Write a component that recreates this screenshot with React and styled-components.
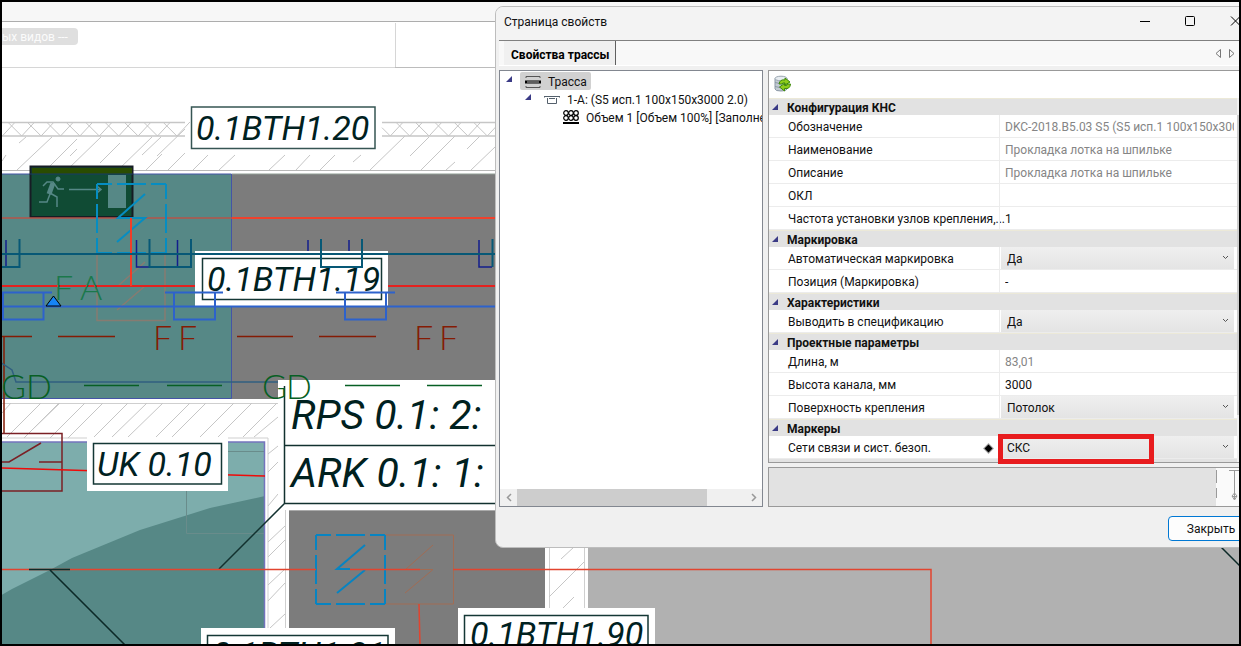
import React from "react";
import styled, { createGlobalStyle, css } from "styled-components";

const UI = `Roboto, "Noto Sans", sans-serif`;
const CAD = `Roboto, "Liberation Sans", sans-serif`;

const Global = createGlobalStyle`
  *, *::before, *::after { box-sizing: border-box; }
  body { margin: 0; background: #000; font: 12px/16px ${UI}; color: #111; }
`;

const Stage = styled.main`
  position: relative;
  height: 100vh;
  border: 2px solid #000;
  background: #fff;
  overflow: hidden;
`;

const Plan = styled.svg`
  position: absolute;
  inset: 0;
  width: 100%;
  height: 100%;
`;

const PlanLabel = styled.text`
  font-family: ${CAD};
  font-style: italic;
  font-size: ${(p) => (p.$large ? 41 : 34)}px;
  fill: #00211f;
`;

const LineLabel = styled.text`
  font-family: Lato, "Open Sans", sans-serif;
  font-weight: 300;
  font-size: 34px;
`;

const ViewTag = styled.button`
  position: absolute;
  top: 26px;
  left: -6px;
  height: 17px;
  padding: 0 10px 0 6px;
  border: 0;
  border-radius: 4px;
  background: #dfdfdf;
  color: #fbfbfb;
  font: 12px/16px ${UI};
`;

/* ---------- dialog ---------- */

const Dialog = styled.section`
  position: absolute;
  top: 4px;
  left: 493px;
  right: -21px;
  display: flex;
  flex-direction: column;
  border: 1px solid #bdbdbd;
  border-radius: 8px;
  background: #f0f0f0;
  overflow: hidden;
`;

const TitleBar = styled.header`
  display: flex;
  align-items: center;
  height: 33px;
  padding: 0 1px 4px 8px;
  background: #f3f3f3;
`;

const Title = styled.h1`
  flex: 1;
  margin: 0;
  font: 12px/16px ${UI};
`;

const WindowButton = styled.button`
  display: grid;
  place-items: center;
  width: 45px;
  height: 28px;
  padding: 0;
  border: 0;
  background: none;
`;

const Tabs = styled.div`
  display: flex;
  align-items: stretch;
  height: 26px;
  margin-left: 3px;
  padding-left: 5px;
  border-top: 1px solid #808080;
  border-bottom: 1px solid #fff;
  background: #f8f8f8;
`;

const Tab = styled.button`
  padding: 3px 7px 0;
  width: 112px;
  border: 0;
  border-right: 1px solid #606060;
  background: #f0f0f0;
  color: #000;
  font: 700 12px/16px ${UI};
  text-align: left;
  white-space: nowrap;
`;

const TabArrows = styled.div`
  display: flex;
  align-items: center;
  gap: 6px;
  margin-left: auto;
  padding-right: 24px;
`;

const ArrowButton = styled.button`
  display: grid;
  width: 7px;
  padding: 0;
  border: 0;
  background: none;
`;

const Body = styled.div`
  display: grid;
  grid-template-columns: 264px 1fr;
  gap: 5px;
  padding: 4px 5px 0 3px;
`;

const TreePanel = styled.nav`
  display: flex;
  flex-direction: column;
  border: 1px solid #828790;
  background: #fff;
  min-width: 0;
`;

const Tree = styled.ul`
  flex: 1;
  margin: 0;
  padding: 1px 0 0;
  list-style: none;
  overflow: hidden;
`;

const TreeItem = styled.li`
  display: flex;
  align-items: center;
  height: 18px;
  padding-left: ${(p) => 6 + p.$level * 19}px;
  white-space: nowrap;
`;

const Twist = styled.span`
  display: flex;
  align-items: flex-start;
  flex: none;
  width: 14px;
  height: 10px;
`;

const Node = styled.span`
  display: flex;
  align-items: center;
  gap: 7px;
  height: 18px;
  padding: 1px 4px 0 5px;
  border-radius: 2px;
  background: ${(p) => (p.$selected ? "#d1d1d1" : "none")};
`;

const ScrollTrack = styled.div`
  display: flex;
  justify-content: space-between;
  height: 17px;
  background: #f0f0f0;
`;

const ScrollButton = styled.button`
  display: grid;
  place-items: center;
  width: 17px;
  padding: 0;
  border: 0;
  background: none;
`;

const ScrollThumb = styled.div`
  width: 190px;
  margin-right: auto;
  background: #cdcdcd;
`;

const Side = styled.div`
  display: flex;
  flex-direction: column;
  gap: 4px;
  min-width: 0;
`;

const PropsPanel = styled.div`
  border: 1px solid #999;
  background: #fff;
`;

const ToolRow = styled.div`
  display: flex;
  height: 27px;
  padding: 4px 5px;
`;

const ToolButton = styled.button`
  width: 18px;
  height: 18px;
  padding: 0;
  border: 0;
  background: none;
`;

const Grid = styled.div`
  display: grid;
  grid-template-columns: 1fr 16px;
`;

const Section = styled.h2`
  display: flex;
  align-items: center;
  gap: 8px;
  height: 17px;
  margin: 0;
  padding: 1px 0 0 3px;
  border-top: 1px solid #ece9d8;
  background: #e2e2e2;
  font: 700 12px/16px ${UI};
`;

const SectionEdge = styled.div`
  height: 3px;
  background: #e2e2e2;
`;

const Row = styled.div`
  display: grid;
  grid-template-columns: 230px minmax(0, 1fr);
  height: 23px;
  border-bottom: 1px solid #ececec;
`;

const Name = styled.label`
  display: flex;
  align-items: center;
  justify-content: space-between;
  padding: 2px 5px 0 19px;
  white-space: nowrap;
`;

const Value = styled.div`
  position: relative;
  display: flex;
  padding-right: 3px;
  border-left: 1px solid #ececec;
`;

const field = css`
  flex: 1;
  min-width: 0;
  border: 0;
  border-radius: 0;
  outline: 0;
  font: 12px/16px ${UI};
`;

const TextField = styled.input`
  ${field}
  padding: 2px 0 0 5px;
  background: none;
  color: ${(p) => (p.readOnly ? "#858585" : "#111")};
`;

const Select = styled.select`
  ${field}
  appearance: none;
  margin-left: 1px;
  padding: 2px 20px 0 6px;
  background: linear-gradient(#efefef, #e4e4e4);
  color: #111;
`;

const Chevron = styled.svg`
  position: absolute;
  right: 8px;
  top: 8px;
  pointer-events: none;
`;

const RedFrame = styled.span`
  position: absolute;
  z-index: 1;
  top: -2px;
  left: -2px;
  width: 156px;
  height: 30px;
  border: 5px solid #e81c1e;
  pointer-events: none;
`;

const VerticalTrack = styled.div`
  padding: 17px 0 47px;
  background: #f0f0f0;
`;

const VerticalThumb = styled.div`
  height: 100%;
  background: #cdcdcd;
`;

const Hint = styled.div`
  display: flex;
  justify-content: flex-end;
  height: 40px;
  border: 1px solid #999;
  background: #e2e2e2;
`;

const Footer = styled.footer`
  display: flex;
  justify-content: flex-end;
  padding: 9px 5px 6px;
`;

const CloseButton = styled.button`
  width: 86px;
  height: 25px;
  padding: 0;
  border: 1px solid #0078d4;
  border-radius: 4px;
  background: #fdfdfd;
  color: #111;
  font: 12px/16px ${UI};
`;

/* ---------- icons ---------- */

const Triangle = () => (
  <svg width="7" height="7" viewBox="0 0 7 7" aria-hidden="true">
    <path d="M6 0V6H0Z" fill="#3b3b86" />
  </svg>
);

const RouteIcon = () => (
  <svg width="16" height="16" viewBox="0 0 16 16" fill="none" aria-hidden="true">
    <path d="M1 4V2.5H15V4M1 12V13.5H15V12" stroke="#555" />
    <path d="M0 8H16" stroke="#000" strokeWidth="3" />
    <path d="M2 8H14" stroke="#bbb" />
  </svg>
);

const TrayIcon = () => (
  <svg width="16" height="16" viewBox="0 0 16 16" fill="none" aria-hidden="true">
    <path d="M0 4.5H16M0 6V4M16 6V4M3.5 6V11.5H12.5V6M5 6.5H11" stroke="#54606c" />
  </svg>
);

const CablesIcon = () => (
  <svg width="16" height="16" viewBox="0 0 16 16" fill="none" stroke="#000" aria-hidden="true">
    {[3, 8, 13].map((x) => [3, 8].map((y) => <circle key={`${x}-${y}`} cx={x} cy={y} r="2.3" strokeWidth="1.200" />))}
    <path d="M0 13H16" strokeWidth="2" />
  </svg>
);

const DatabaseIcon = () => (
  <svg width="18" height="18" viewBox="0 0 18 18" aria-hidden="true">
    <path d="M1 3.5V14Q1 16 7 16T13 14V3.5" fill="#c3cbd3" stroke="#8b98a5" />
    <ellipse cx="7" cy="3.5" rx="6" ry="2.3" fill="#e8edf1" stroke="#9aa6b1" />
    <path d="M1 7.5Q7 10 13 7.5M1 11.5Q7 14 13 11.5" fill="none" stroke="#8b98a5" />
    <path d="M5 9Q6 4 11 5V3L16 7L11 10V8Q8 7.500 8 9Z" fill="#8fcc1c" stroke="#3e8a0a" />
    <path d="M16.500 9Q16 14.500 10.500 13.500V16L5.500 12L10.500 8.500V10.500Q13.500 11 13.500 9Z" fill="#8fcc1c" stroke="#3e8a0a" />
  </svg>
);

const Diamond = () => (
  <svg width="11" height="11" viewBox="0 0 11 11" aria-hidden="true">
    <path d="M5.500 0L11 5.500L5.500 11L0 5.500Z" fill="#a9a9a9" />
    <path d="M5.500 1.500L9.500 5.500L5.500 9.500L1.500 5.500Z" fill="#000" />
  </svg>
);

/* ---------- plan ---------- */

const lines = (list) => list.map(([a, b, c, d]) => `M${a} ${b}L${c} ${d}`).join("");

const crosses = (from, to) => {
  let d = "";
  for (let x = 2.3; x < 500; x += 19.4) {
    if (x - 14 >= from - 8 && x <= to) d += `M${Math.max(x - 14, from)} ${Math.max(x - 14, from) - x + 136}L${x} 136`;
    if (x >= from - 8 && x + 13 <= to + 8) d += `M${x} 136L${x + 13} 122`;
  }
  return d;
};

const upperHatch = lines([
  [2, 161, 6, 155], [19, 143, 26, 137], [17, 170, 52, 137], [46, 170, 77, 139], [70, 156, 77, 149],
  [67, 170, 101, 137], [100, 163, 120, 143], [118, 170, 152, 137], [142, 155, 161, 137], [157, 156, 185, 129],
  [146, 170, 162, 154], [168, 170, 185, 153], [193, 170, 208, 155], [219, 170, 235, 155], [269, 170, 285, 155],
  [296, 170, 310, 155], [320, 170, 335, 155], [353, 162, 361, 155], [370, 170, 405, 136], [410, 156, 429, 137],
  [421, 170, 455, 136], [446, 170, 455, 162], [467, 149, 480, 136], [471, 170, 495, 147],
]);

const lowerHatch = lines([
  [2, 413, 11, 403], [7, 437, 41, 403], [24, 438, 59, 403], [32, 430, 60, 403], [50, 438, 85, 403],
  [68, 438, 103, 403], [76, 430, 102, 404], [94, 437, 128, 403], [112, 437, 147, 403], [128, 437, 163, 403],
  [156, 437, 190, 403], [172, 437, 206, 403], [200, 437, 234, 403], [218, 437, 252, 403], [243, 437, 277, 403],
  [254, 437, 278, 417], [268, 454, 278, 446], [268, 472, 278, 462], [268, 506, 278, 494], [268, 542, 285, 526],
  [268, 557, 285, 540], [268, 585, 285, 569], [268, 601, 285, 583], [270, 628, 285, 614],
  [561, 559, 574, 547], [549, 597, 584, 562], [563, 608, 574, 597],
]);

function FloorPlan() {
  return (
    <Plan fill="none" aria-label="План этажа">
      <g transform="translate(-2 -2)">
        <path d="M0 2H1241V22H0Z" fill="#f7f7f7" />
        <path d="M0 21.5H1241" stroke="#adadad" />
        <path d="M0 67.500H395M395.500 23V68" stroke="#d6d6d6" />
        <path d="M395 67.500H500" stroke="#bcbcbc" />
        <g stroke="#c6c6c6">
          <path d="M0 122.500H185M382 122.500H500M0 136H185M382 136H500" strokeWidth="1.500" />
          <path d={crosses(2, 184)} />
          <path d={crosses(382, 500)} />
          <path d={upperHatch} />
        </g>
        <path d="M0 170.500H500" stroke="#b8b8b8" />

        <path d="M0 174H232V399H0Z" fill="#568886" />
        <path d="M232 174H500V399H232Z" fill="#7c7c7c" />
        <path d="M0 174H231.500V398.500H0" stroke="#4454a6" />
        <path d="M232 174H500" stroke="#8f9c93" />

        <path d="M0 399H278V442H0Z" fill="#fff" />
        <path d="M0 442H265V646H0Z" fill="#7dadac" />
        <path d="M0 596L12 589L50 570L72 558L140 530L210 508L265 496V646H0Z" fill="#568886" />
        <path d="M186.500 491V533.500H265M228 451.500H265" stroke="#698c8b" />
        <path d="M0 442H264.500V630" stroke="#7474bd" strokeWidth="1.500" />
        <path d="M0 403.500H278M0 438H268V646M285.500 510V646M549.500 547V646M584.500 547V646" stroke="#cfcfcf" />
        <path d={lowerHatch} stroke="#c6c6c6" />
        <path d="M289 510H545V646H289Z" fill="#7c7c7c" />
        <path d="M588 540H1241V646H588Z" fill="#b1b1b1" />
        <path d="M289 510.500H500" stroke="#aaa" />

        <path d="M278 380H500V508H278Z" fill="#fff" />
        <path d="M284.500 386V503.500H500M284 445.500H500M284.500 503.500L219 569" stroke="#12312f" strokeWidth="1.500" />
        <PlanLabel $large x="291" y="429">RPS 0.1: 2:</PlanLabel>
        <PlanLabel $large x="291" y="487">ARK 0.1: 1:</PlanLabel>

        {/* evacuation sign */}
        <path d="M30.500 166.500H132.500V217H30.500Z" fill="#104b34" stroke="#161c24" strokeWidth="2" />
        <path d="M32 168H132V174H32Z" fill="#2a4c00" />
        <path d="M30 174H133" stroke="#193b66" />
        <path d="M108 175H126V208H108Z" fill="#568886" />
        <g stroke="#568886" strokeWidth="1.500">
          <path d="M69 189.500H100M97 186L101 189.500L97 193" />
          <circle cx="58" cy="179" r="2" fill="#568886" strokeWidth="1" />
          <path d="M43 186L47 182H53L58 189H64M50 193L57 197V207M50 194L47 202H39" />
          <path d="M53 183L49 194" strokeWidth="5" />
        </g>

        {/* wiring */}
        <path d="M0 218H232" stroke="#b65549" strokeWidth="1.500" />
        <path d="M232 218H500" stroke="#ef412c" strokeWidth="2" />
        <path d="M97 253V320.500H165V253M145 262L118 286M145 286L117 310" stroke="#877b71" strokeWidth="1.500" />
        <path d="M0 286H200M380 286H500" stroke="#e4211f" strokeWidth="2" />
        <path d="M97 184H166V253H97Z" stroke="#068dc2" strokeWidth="2" strokeDasharray="15 5 29 5 15 0" />
        <path d="M145 194L118 218H145L117 242" stroke="#068dc2" strokeWidth="2" />
        <path d="M131 218V286" stroke="#f03d28" strokeWidth="2" />
        <LineLabel x="54" y="300" fill="#1b784b">F</LineLabel>
        <LineLabel x="80" y="300" fill="#1b784b">A</LineLabel>

        <path d="M195 251H388V306H195Z" fill="#fff" />
        <path d="M202.500 258.500H381.500V299.500H202.500Z" stroke="#143735" strokeWidth="1.500" />
        <PlanLabel x="207" y="291">0.1BTH1.19</PlanLabel>

        <path d="M6 240V267M136.500 240V267H149M177.500 240V267M308 240V251M349 240V251M479 240V267H492" stroke="#131e8c" strokeWidth="1.500" />
        <path d="M0 254H500M0 267H19.500V239M149.500 239V267H191V239M321 239V267H362V239M492.500 239V267" stroke="#075876" strokeWidth="2" />
        <path d="M0 306.500H500M0 292.500H52M3 292V319.500H43.500V292M165 292.500H223M174 292V319.500H215V292M336 292.500H395M345 292V319.500H386V292" stroke="#2d62cc" strokeWidth="2" />
        <path d="M53.500 296L61 306H46Z" fill="#1684f5" stroke="#000" />

        <path d="M0 336.500H32M58 336.500H115M237 336.500H293M319 336.500H376M4 336V434" stroke="#851b04" strokeWidth="1.500" />
        <g fill="#851b04">
          <LineLabel x="153" y="350">F</LineLabel>
          <LineLabel x="178" y="350">F</LineLabel>
          <LineLabel x="414" y="350">F</LineLabel>
          <LineLabel x="439" y="350">F</LineLabel>
        </g>
        <path d="M0 362L12 370L16 382H278" stroke="#315f80" strokeWidth="1.500" />
        <path d="M84 385.500H139M167 385.500H222M345 385.500H400M427 385.500H482" stroke="#075f24" strokeWidth="1.500" />
        <g fill="#075f24">
          <LineLabel x="1" y="399">G</LineLabel>
          <LineLabel x="26" y="399">D</LineLabel>
          <LineLabel x="262" y="399">G</LineLabel>
          <LineLabel x="286" y="399">D</LineLabel>
        </g>

        <path d="M0 433.500H62V491H0M0 462H9L41 443M39 462H62" stroke="#7b2025" strokeWidth="1.500" />
        <path d="M0 468L265 476" stroke="#f00a08" strokeWidth="1.500" />

        <path d="M385 535H453.500V604H385M433 545L406 569M420 569.500H433L405 593" stroke="#a16c54" />
        <path d="M316 535H385V604H316Z" stroke="#0784c2" strokeWidth="2" strokeDasharray="15 5 29 5 15 0" />
        <path d="M365 545L337 569H350M365 570L337 593" stroke="#0784c2" strokeWidth="2" />
        <path d="M0 569.500H316M350 569.500H420M453 569.500H931V646M419 604L420 646" stroke="#e2442f" strokeWidth="1.500" />
        <path d="M29 569.500H70M50 570L125 645M1220 546L1241 567" stroke="#0c2927" strokeWidth="1.500" />

        {/* room tags */}
        <path d="M191.500 107H375V148.500H191.500Z" fill="#fff" stroke="#365553" strokeWidth="1.500" />
        <PlanLabel x="196" y="140">0.1BTH1.20</PlanLabel>
        <path d="M87 437H228V491H87Z" fill="#fff" />
        <path d="M93.500 443.500H221.500V484H93.500Z" stroke="#143735" strokeWidth="1.500" />
        <PlanLabel x="97" y="476">UK 0.10</PlanLabel>
        <path d="M201 628H395V650H201Z" fill="#fff" />
        <path d="M207.500 650V635.500H388V650" stroke="#143735" strokeWidth="1.500" />
        <PlanLabel x="212" y="666">0.1BTH1.21</PlanLabel>
        <path d="M458 608H655V650H458Z" fill="#fff" />
        <path d="M464.500 650V615.500H648V650" stroke="#143735" strokeWidth="1.500" />
        <PlanLabel x="470" y="646">0.1BTH1.90</PlanLabel>
      </g>
    </Plan>
  );
}

/* ---------- data ---------- */

const SECTIONS = [
  ["Конфигурация КНС", [
    { name: "Обозначение", value: "DKC-2018.B5.03 S5 (S5 исп.1 100x150x3000 2.0)", fixed: true },
    { name: "Наименование", value: "Прокладка лотка на шпильке", fixed: true },
    { name: "Описание", value: "Прокладка лотка на шпильке", fixed: true },
    { name: "ОКЛ", value: "" },
    { name: "Частота установки узлов крепления,...", value: "1" },
  ]],
  ["Маркировка", [
    { name: "Автоматическая маркировка", value: "Да", list: true },
    { name: "Позиция (Маркировка)", value: "-" },
  ]],
  ["Характеристики", [{ name: "Выводить в спецификацию", value: "Да", list: true }]],
  ["Проектные параметры", [
    { name: "Длина, м", value: "83,01", fixed: true },
    { name: "Высота канала, мм", value: "3000" },
    { name: "Поверхность крепления", value: "Потолок", list: true },
  ]],
  ["Маркеры", [{ name: "Сети связи и сист. безоп.", value: "СКС", list: true, marked: true }]],
];

const TREE = [
  { text: "Трасса", icon: <RouteIcon />, open: true, selected: true },
  { text: "1-А: (S5 исп.1 100x150x3000 2.0)", icon: <TrayIcon />, open: true },
  { text: "Объем 1 [Объем 100%] [Заполнение 0%]", icon: <CablesIcon /> },
];

function Property({ id, item }) {
  return (
    <Row>
      <Name htmlFor={id}>
        {item.name}
        {item.marked && <Diamond />}
      </Name>
      <Value>
        {item.list ? (
          <>
            <Select id={id} defaultValue={item.value}>
              <option>{item.value}</option>
            </Select>
            <Chevron width="7" height="5" viewBox="0 0 7 5" fill="none" stroke="#555">
              <path d="M1 1L3.500 3.500L6 1" />
            </Chevron>
          </>
        ) : (
          <TextField id={id} type="text" defaultValue={item.value} readOnly={item.fixed} />
        )}
        {item.marked && <RedFrame />}
      </Value>
    </Row>
  );
}

export default function App() {
  return (
    <Stage>
      <Global />
      <FloorPlan />
      <ViewTag type="button">ых видов ---</ViewTag>
      <Dialog aria-label="Страница свойств">
        <TitleBar>
          <Title>Страница свойств</Title>
          <WindowButton type="button" aria-label="Свернуть">
            <svg width="11" height="11" stroke="#000"><path d="M0 5.500H10" /></svg>
          </WindowButton>
          <WindowButton type="button" aria-label="Развернуть">
            <svg width="11" height="11" fill="none" stroke="#000"><rect x="0.500" y="0.500" width="9" height="9" rx="1" /></svg>
          </WindowButton>
          <WindowButton type="button" aria-label="Закрыть окно">
            <svg width="11" height="11" stroke="#000"><path d="M1 0.500L10 9.500M10 0.500L1 9.500" /></svg>
          </WindowButton>
        </TitleBar>
        <Tabs>
          <Tab type="button">Свойства трассы</Tab>
          <TabArrows>
            <ArrowButton type="button" aria-label="Назад">
              <svg width="7" height="9" fill="none" stroke="#777"><path d="M5.500 0.500V8.500L1 4.500Z" /></svg>
            </ArrowButton>
            <ArrowButton type="button" aria-label="Вперёд">
              <svg width="7" height="9" fill="none" stroke="#777"><path d="M1.500 0.500V8.500L6 4.500Z" /></svg>
            </ArrowButton>
          </TabArrows>
        </Tabs>
        <Body>
          <TreePanel>
            <Tree>
              {TREE.map((node, level) => (
                <TreeItem key={node.text} $level={level}>
                  <Twist>{node.open && <Triangle />}</Twist>
                  <Node $selected={node.selected}>
                    {node.icon}
                    {node.text}
                  </Node>
                </TreeItem>
              ))}
            </Tree>
            <ScrollTrack>
              <ScrollButton type="button" aria-label="Прокрутить влево">
                <svg width="6" height="9" fill="none" stroke="#999" strokeWidth="1.500"><path d="M5 1L1.500 4.500L5 8" /></svg>
              </ScrollButton>
              <ScrollThumb />
              <ScrollButton type="button" aria-label="Прокрутить вправо">
                <svg width="6" height="9" fill="none" stroke="#999" strokeWidth="1.500"><path d="M1 1L4.500 4.500L1 8" /></svg>
              </ScrollButton>
            </ScrollTrack>
          </TreePanel>
          <Side>
            <PropsPanel>
              <ToolRow>
                <ToolButton type="button" aria-label="Обновить из базы">
                  <DatabaseIcon />
                </ToolButton>
              </ToolRow>
              <Grid>
                <div>
                  {SECTIONS.map(([title, items], s) => (
                    <React.Fragment key={title}>
                      <Section>
                        <Triangle />
                        {title}
                      </Section>
                      {items.map((item, i) => (
                        <Property key={item.name} id={`p${s}-${i}`} item={item} />
                      ))}
                    </React.Fragment>
                  ))}
                  <SectionEdge />
                </div>
                <VerticalTrack>
                  <VerticalThumb />
                </VerticalTrack>
              </Grid>
            </PropsPanel>
            <Hint>
              <svg width="37" height="38" fill="none" aria-hidden="true">
                <path d="M0 0H38V38H0Z" fill="#fafafa" />
                <path d="M0.500 2V15M0.500 20V30M13 2.500H30M18.500 2V31M16 28.500H21M18.500 25L16 28L18.500 32L21 28Z" stroke="#9a9a9a" />
              </svg>
            </Hint>
          </Side>
        </Body>
        <Footer>
          <CloseButton type="button">Закрыть</CloseButton>
        </Footer>
      </Dialog>
    </Stage>
  );
}
